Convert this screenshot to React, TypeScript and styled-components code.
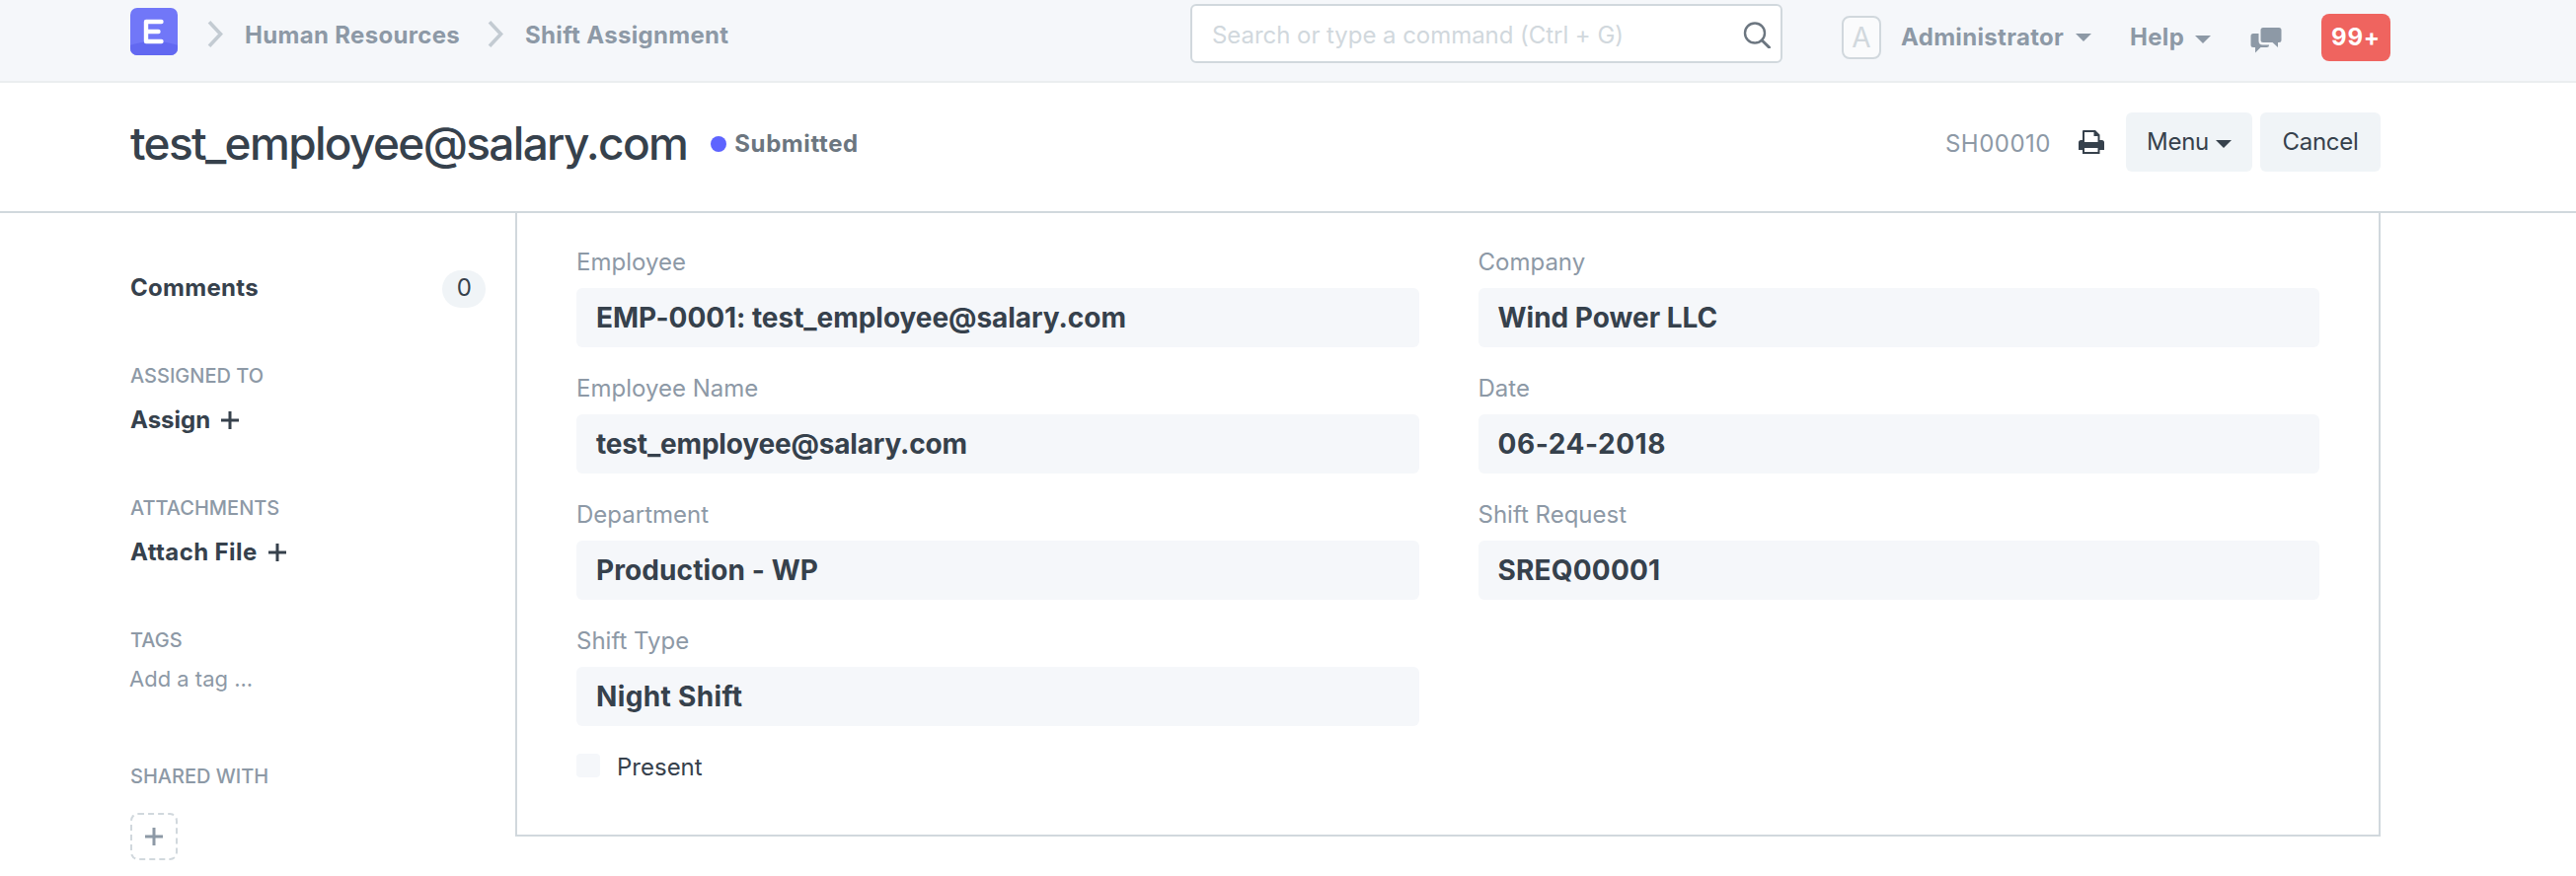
import React from 'react';
import styled, { createGlobalStyle } from 'styled-components';

const Global = createGlobalStyle`
  * { box-sizing: border-box; }
  body {
    margin: 0;
    background: #fff;
    color: #36414c;
    font-family: Inter, 'Liberation Sans', sans-serif;
    font-size: 24px;
    line-height: 30px;
  }
`;

const Navbar = styled.header`
  height: 84px;
  padding: 0 188px 0 132px;
  display: flex;
  align-items: flex-start;
  background: #f5f7fa;
  border-bottom: 2px solid #ebeef0;
`;

const Logo = styled.svg`
  width: 48px;
  height: 48px;
  margin-top: 8px;
`;

const Chevron = styled.svg<{ $left: number }>`
  width: 18px;
  height: 30px;
  margin: 20px 0 0 ${(p) => p.$left}px;
`;

const Crumb = styled.a`
  margin: 21px 0 0 20px;
  font-weight: 700;
  letter-spacing: 0.32px;
  color: #8d99a6;
  white-space: nowrap;
`;

const Search = styled.div`
  width: 600px;
  height: 60px;
  margin: 4px 0 0 auto;
  padding: 0 9px 0 20px;
  display: flex;
  align-items: center;
  justify-content: space-between;
  border: 2px solid #d1d8dd;
  border-radius: 6px;
  background: #fff;
  color: #d1d8dd;
  letter-spacing: -0.05px;

  span { margin-top: 3px; }
`;

const Avatar = styled.div`
  width: 40px;
  height: 44px;
  margin: 16px 0 0 60px;
  display: flex;
  align-items: center;
  justify-content: center;
  border: 2px solid #d1d8dd;
  border-radius: 8px;
  background: #fafbfc;
  color: #d1d8dd;
  font-size: 28px;
`;

const NavMenu = styled.div<{ $width: number; $left: number }>`
  width: ${(p) => p.$width}px;
  margin: 23px 0 0 ${(p) => p.$left}px;
  display: flex;
  justify-content: space-between;
  color: #8d99a6;
  font-weight: 700;
  letter-spacing: 0.32px;
`;

const Caret = styled.i<{ $top: number }>`
  width: 0;
  height: 0;
  margin-top: ${(p) => p.$top}px;
  border: solid transparent;
  border-width: 8px 8px 0;
  border-top-color: currentColor;
`;

const ChatIcon = styled.svg`
  width: 32px;
  height: 28px;
  margin: 27px 0 0 40px;
`;

const CountBadge = styled.div`
  width: 70px;
  height: 48px;
  margin: 14px 0 0 40px;
  border-radius: 8px;
  background: #ef645f;
  color: #fff;
  font-weight: 700;
  letter-spacing: 0.8px;
  line-height: 47px;
  text-align: center;
`;

const PageHead = styled.div`
  height: 132px;
  padding: 0 198px 0 132px;
  display: flex;
  align-items: flex-start;
  border-bottom: 2px solid #d1d8dd;
`;

const Title = styled.h1`
  margin: 30px 0 0;
  font-size: 46px;
  line-height: 62px;
  font-weight: 500;
  letter-spacing: -1.67px;
  white-space: nowrap;
`;

const Status = styled.div`
  margin: 47px auto 0 24px;
  display: flex;
  align-items: center;
  gap: 8px;
  color: #6c7680;
  font-weight: 700;
  letter-spacing: 0.6px;

  &::before {
    content: '';
    width: 16px;
    height: 16px;
    border-radius: 50%;
    background: #5e64ff;
  }
`;

const DocName = styled.span`
  margin: 47px 27px 0 0;
  color: #8d99a6;
  letter-spacing: 0.5px;
`;

const PrintIcon = styled.svg`
  width: 28px;
  height: 26px;
  margin: 48px 21px 0 0;
`;

const Button = styled.button<{ $width: number }>`
  width: ${(p) => p.$width}px;
  height: 60px;
  margin: 30px 0 0 8px;
  padding: 0 0 1px;
  display: flex;
  align-items: center;
  justify-content: center;
  gap: 7px;
  border: 0;
  border-radius: 6px;
  background: #f0f4f7;
  color: #36414c;
  font: inherit;
  letter-spacing: -0.3px;

  &:first-of-type { margin-left: 0; }
`;

const Body = styled.main`
  padding: 0 198px 0 132px;
  display: flex;
  align-items: flex-start;
`;

const Sidebar = styled.aside`
  width: 390px;
  padding: 58px 30px 0 0;
`;

const CommentRow = styled.div`
  height: 38px;
  display: flex;
  justify-content: space-between;
  font-weight: 700;
  letter-spacing: 0.3px;
  line-height: 35px;
`;

const Pill = styled.span`
  width: 44px;
  height: 38px;
  padding-left: 1px;
  border-radius: 19px;
  background: #f0f4f7;
  font-weight: 400;
  text-align: center;
`;

const SideLabel = styled.div<{ $top: number }>`
  margin-top: ${(p) => p.$top}px;
  color: #8d99a6;
  font-size: 20px;
  font-weight: 500;
  line-height: 28px;
`;

const SideAction = styled.div<{ $spacing?: number }>`
  margin-top: 16px;
  display: flex;
  align-items: center;
  gap: 11px;
  font-weight: 700;
  letter-spacing: ${(p) => p.$spacing ?? 0}px;
`;

const TagInput = styled.div`
  margin: 11px 0 0 -1px;
  color: #8d99a6;
  font-size: 22px;
  line-height: 28px;
`;

const ShareButton = styled.div`
  width: 48px;
  height: 48px;
  margin-top: 23px;
  display: flex;
  align-items: center;
  justify-content: center;
  border: 2px dashed #d1d8dd;
  border-radius: 8px;
  color: #8d99a6;
`;

const FormBox = styled.section`
  width: 1890px;
  height: 632px;
  padding: 35px 60px 0;
  display: grid;
  grid-template-columns: 853.5px 852.5px;
  column-gap: 60px;
  border: 2px solid #d1d8dd;
  border-top: 0;
`;

const Column = styled.div`
  display: flex;
  flex-direction: column;
`;

const Field = styled.div`
  height: 128px;
`;

const FieldLabel = styled.label`
  display: block;
  height: 41px;
  color: #8d99a6;
`;

const FieldValue = styled.div<{ $spacing: number }>`
  height: 60px;
  padding-left: 20px;
  border-radius: 6px;
  background: #f5f7fa;
  font-size: 28px;
  font-weight: 700;
  line-height: 60px;
  letter-spacing: ${(p) => p.$spacing}px;
`;

const CheckRow = styled.div`
  display: flex;
  gap: 17px;
`;

const CheckBox = styled.span`
  width: 24px;
  height: 24px;
  margin-top: 1px;
  border-radius: 4px;
  background: #f5f7fa;
`;

type FieldData = { label: string; value: string; spacing: number };

const leftFields: FieldData[] = [
  { label: 'Employee', value: 'EMP-0001: test_employee@salary.com', spacing: -0.05 },
  { label: 'Employee Name', value: 'test_employee@salary.com', spacing: -0.18 },
  { label: 'Department', value: 'Production - WP', spacing: 0.1 },
  { label: 'Shift Type', value: 'Night Shift', spacing: 0.35 },
];

const rightFields: FieldData[] = [
  { label: 'Company', value: 'Wind Power LLC', spacing: 0 },
  { label: 'Date', value: '06-24-2018', spacing: 0.55 },
  { label: 'Shift Request', value: 'SREQ00001', spacing: 0.2 },
];

const renderField = (f: FieldData) => (
  <Field key={f.label}>
    <FieldLabel>{f.label}</FieldLabel>
    <FieldValue $spacing={f.spacing}>{f.value}</FieldValue>
  </Field>
);

const Separator = ({ left }: { left: number }) => (
  <Chevron $left={left} viewBox="0 0 18 30" fill="none" stroke="#c3cbd2" strokeWidth="3.6">
    <path d="M2 2.3L13.500 14.500L2 26.700" />
  </Chevron>
);

const Plus = () => (
  <svg width="18" height="18" viewBox="0 0 18 18" stroke="currentColor" strokeWidth="3">
    <path d="M9 0V18M0 9H18" />
  </svg>
);

export default function App() {
  return (
    <>
      <Global />
      <Navbar>
        <Logo viewBox="0 0 48 48">
          <defs>
            <clipPath id="logo-clip"><rect width="48" height="48" rx="7" /></clipPath>
          </defs>
          <g clipPath="url(#logo-clip)">
            <rect width="48" height="48" fill="#7177f8" />
            <ellipse cx="24" cy="49" rx="36" ry="15" fill="#6268f1" />
          </g>
          <path d="M31.5 14H16V34H31.5M16 24H28.5" fill="none" stroke="#fff" strokeWidth="4.4" strokeLinecap="round" strokeLinejoin="round" />
        </Logo>
        <Separator left={30} />
        <Crumb>Human Resources</Crumb>
        <Separator left={28} />
        <Crumb>Shift Assignment</Crumb>
        <Search>
          <span>Search or type a command (Ctrl + G)</span>
          <svg width="30" height="30" viewBox="0 0 30 30" fill="none" stroke="#6c7680" strokeWidth="2.4" strokeLinecap="round">
            <circle cx="13" cy="14.5" r="10" />
            <path d="M20.3 22L27.5 29" strokeWidth="3" />
          </svg>
        </Search>
        <Avatar>A</Avatar>
        <NavMenu $width={193} $left={20}>Administrator<Caret $top={11} /></NavMenu>
        <NavMenu $width={82} $left={39}>Help<Caret $top={13} /></NavMenu>
        <ChatIcon viewBox="0 0 32 28" fill="#8d99a6">
          <path d="M13 1H29Q31.500 1 31.500 3.500V13.500Q31.500 16 29 16H28V21L22.500 16H13Q10.500 16 10.500 13.500V3.500Q10.500 1 13 1Z" />
          <path d="M3 7H8.500V14.500Q8.500 18.500 12.500 18.500H19V19Q19 21 16.500 21H10.500L5 26.500V21H3Q.5 21 .5 18.500V9.500Q.5 7 3 7Z" />
        </ChatIcon>
        <CountBadge>99+</CountBadge>
      </Navbar>
      <PageHead>
        <Title>test_employee@salary.com</Title>
        <Status>Submitted</Status>
        <DocName>SH00010</DocName>
        <PrintIcon viewBox="0 0 28 26" fill="#36414c">
          <path fillRule="evenodd" d="M6 0H18L22.500 4.500V10H24.500Q27 10 27 12.500V20H22.500V24H5V20H1V12.500Q1 10 3.500 10H5V1Q5 0 6 0ZM7 2V12H20.500V6H16.500V2ZM7 18V22H20.500V18Z" />
        </PrintIcon>
        <Button $width={128}>Menu<Caret $top={4} /></Button>
        <Button $width={122}>Cancel</Button>
      </PageHead>
      <Body>
        <Sidebar>
          <CommentRow>Comments<Pill>0</Pill></CommentRow>
          <SideLabel $top={55}>ASSIGNED TO</SideLabel>
          <SideAction>Assign<Plus /></SideAction>
          <SideLabel $top={60}>ATTACHMENTS</SideLabel>
          <SideAction $spacing={0.4}>Attach File<Plus /></SideAction>
          <SideLabel $top={60}>TAGS</SideLabel>
          <TagInput>Add a tag ...</TagInput>
          <SideLabel $top={71}>SHARED WITH</SideLabel>
          <ShareButton><Plus /></ShareButton>
        </Sidebar>
        <FormBox>
          <Column>
            {leftFields.map(renderField)}
            <CheckRow><CheckBox />Present</CheckRow>
          </Column>
          <Column>{rightFields.map(renderField)}</Column>
        </FormBox>
      </Body>
    </>
  );
}
